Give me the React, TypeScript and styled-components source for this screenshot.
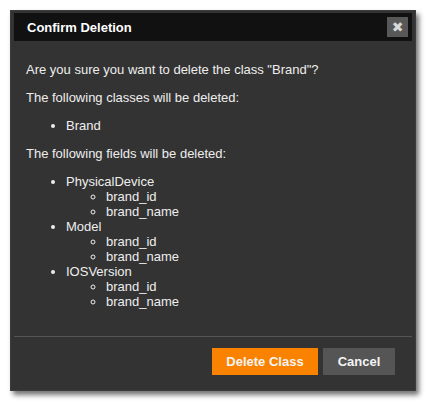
import React from 'react';
import styled, { createGlobalStyle } from 'styled-components';

const GlobalStyle = createGlobalStyle`
  html, body {
    margin: 0;
    padding: 0;
    background: #ffffff;
    font-family: "Liberation Sans", Arial, sans-serif;
  }
`;

const Page = styled.div`
  padding: 10px;
`;

const Dialog = styled.div`
  width: 406px;
  height: 381px;
  box-sizing: border-box;
  background: #333333;
  border: 1px solid #3c3c3c;
  padding: 2px 3px 0 3px;
  box-shadow: 3px 4px 5px rgba(0, 0, 0, 0.55);
  display: flex;
  flex-direction: column;
`;

const Header = styled.div`
  height: 28px;
  background: #111111;
  display: flex;
  align-items: center;
  justify-content: space-between;
  padding: 0 4px 0 13px;
`;

const Title = styled.span`
  color: #ffffff;
  font-size: 13px;
  font-weight: bold;
`;

const CloseButton = styled.button`
  width: 21px;
  height: 20px;
  border: none;
  padding: 0;
  background: #585858;
  color: #d8d8d8;
  font-family: "DejaVu Sans", sans-serif;
  font-size: 14px;
  font-weight: bold;
  line-height: 20px;
  display: flex;
  align-items: center;
  justify-content: center;
`;

const Content = styled.div`
  flex: 1;
  padding: 8px 12px 0 12px;
  color: #eeeeee;
  font-size: 13px;
  line-height: 15px;
`;

const Para = styled.p`
  margin: 13px 0;
`;

const List = styled.ul<{ $nested?: boolean }>`
  margin: ${(p) => (p.$nested ? '0' : '13px 0')};
  padding-left: 40px;
  list-style-type: ${(p) => (p.$nested ? 'circle' : 'disc')};
`;

const Footer = styled.div`
  border-top: 1px solid #555555;
  display: flex;
  justify-content: flex-end;
  gap: 5px;
  padding: 11px 17px 15px 0;
`;

const ActionButton = styled.button<{ $primary?: boolean }>`
  height: 27px;
  border: none;
  padding: 0 14px;
  min-width: ${(p) => (p.$primary ? '106px' : '72px')};
  background: ${(p) => (p.$primary ? '#f98300' : '#555555')};
  color: #f4f4f4;
  font-family: "Liberation Sans", Arial, sans-serif;
  font-size: 13px;
  font-weight: bold;
`;

const fields = ['PhysicalDevice', 'Model', 'IOSVersion'];

const App: React.FC = () => (
  <Page>
    <GlobalStyle />
    <Dialog>
      <Header>
        <Title>Confirm Deletion</Title>
        <CloseButton>✖</CloseButton>
      </Header>
      <Content>
        <Para>Are you sure you want to delete the class "Brand"?</Para>
        <Para>The following classes will be deleted:</Para>
        <List>
          <li>Brand</li>
        </List>
        <Para>The following fields will be deleted:</Para>
        <List>
          {fields.map((f) => (
            <li key={f}>
              {f}
              <List $nested>
                <li>brand_id</li>
                <li>brand_name</li>
              </List>
            </li>
          ))}
        </List>
      </Content>
      <Footer>
        <ActionButton $primary>Delete Class</ActionButton>
        <ActionButton>Cancel</ActionButton>
      </Footer>
    </Dialog>
  </Page>
);

export default App;
